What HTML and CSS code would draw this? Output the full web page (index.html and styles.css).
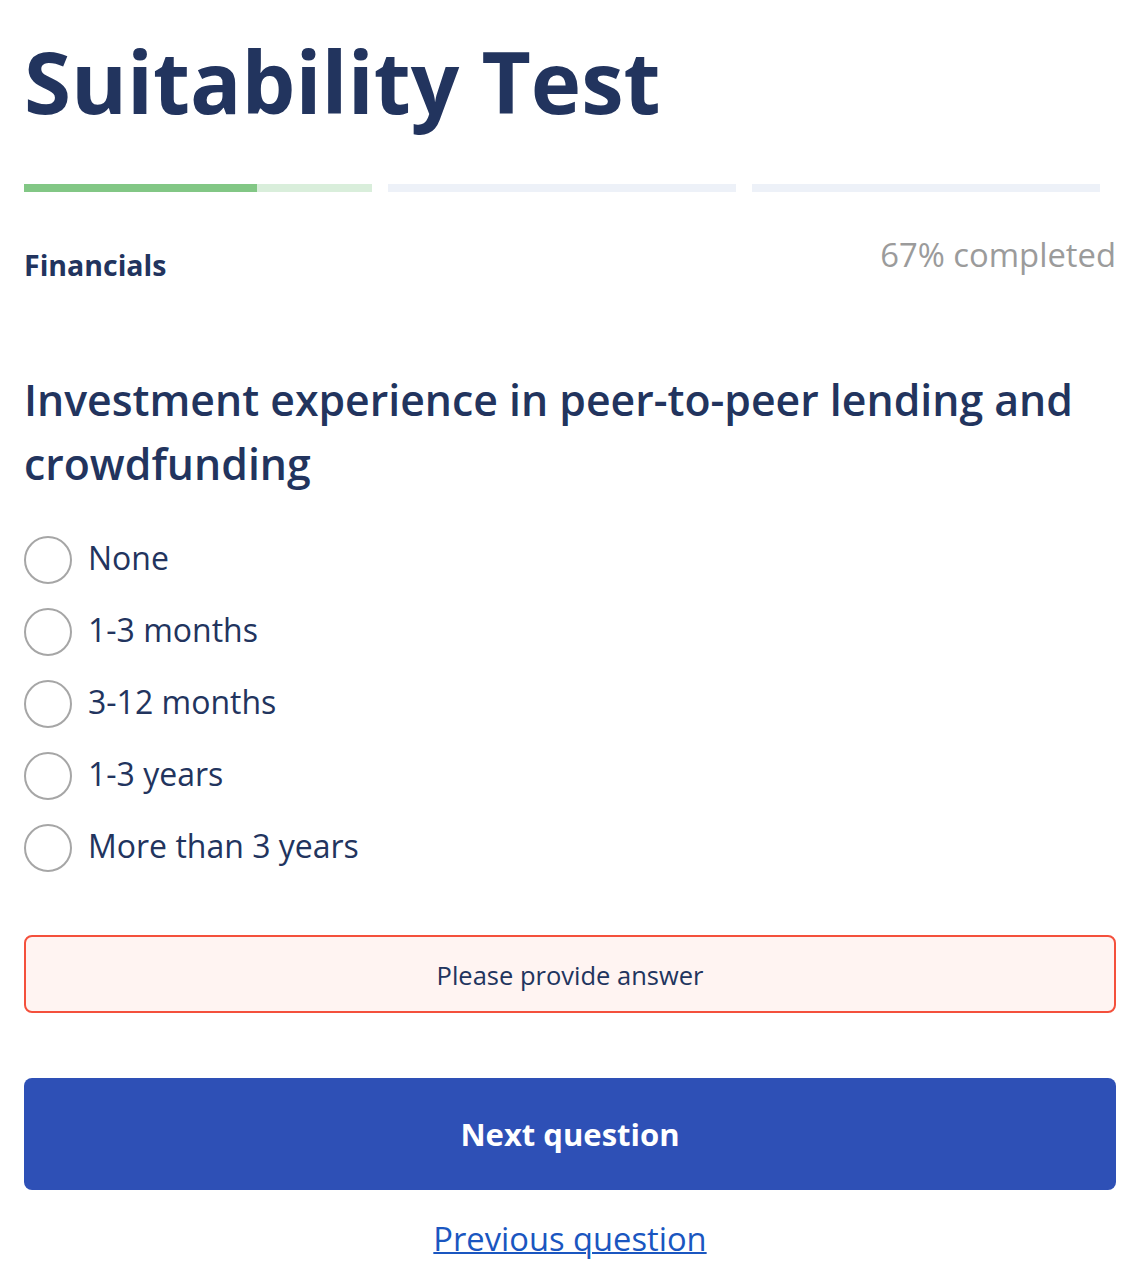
FILE: index.html
```html
<!DOCTYPE html>
<html lang="en">
<head>
<meta charset="utf-8">
<title>Suitability Test</title>
<link rel="stylesheet" href="styles.css">
</head>
<body>
<main class="page">
  <h1 class="title">Suitability Test</h1>

  <div class="steps">
    <div class="step step-active"><div class="step-fill" style="width: 67%"></div></div>
    <div class="step"></div>
    <div class="step"></div>
  </div>

  <div class="status">
    <span class="section">Financials</span>
    <span class="completed">67% completed</span>
  </div>

  <h2 class="question">Investment experience in peer-to-peer lending and crowdfunding</h2>

  <div class="options">
    <label class="option"><input type="radio" name="exp" class="radio"><span class="option-text">None</span></label>
    <label class="option"><input type="radio" name="exp" class="radio"><span class="option-text">1-3 months</span></label>
    <label class="option"><input type="radio" name="exp" class="radio"><span class="option-text">3-12 months</span></label>
    <label class="option"><input type="radio" name="exp" class="radio"><span class="option-text">1-3 years</span></label>
    <label class="option"><input type="radio" name="exp" class="radio"><span class="option-text">More than 3 years</span></label>
  </div>

  <div class="error">Please provide answer</div>

  <button class="next" type="button">Next question</button>

  <div class="prev-wrap"><a class="prev" href="#">Previous question</a></div>
</main>
</body>
</html>
```

FILE: styles.css
```css
* { box-sizing: border-box; }

html, body {
  margin: 0;
  padding: 0;
  background: #ffffff;
}

body {
  font-family: "Open Sans", "Noto Sans", "Liberation Sans", sans-serif;
  color: #22345e;
}

.page {
  padding: 30px 24px 0 24px;
}

.title {
  margin: 0;
  font-size: 85.3px;
  line-height: 103px;
  font-weight: 700;
  color: #22345e;
}

.steps {
  margin-top: 51px;
  display: grid;
  grid-template-columns: repeat(3, 1fr);
  column-gap: 16px;
  padding-right: 16px;
}

.step {
  height: 8px;
  background: #edf1f8;
}

.step-active {
  background: #d9eedb;
}

.step-fill {
  height: 100%;
  background: #82c785;
}

.status {
  margin-top: 43px;
  display: flex;
  justify-content: space-between;
  align-items: flex-start;
}

.section {
  padding-top: 10px;
  font-size: 28.5px;
  line-height: 40px;
  font-weight: 700;
}

.completed {
  font-size: 32.8px;
  line-height: 40px;
  color: #9b9b9b;
}

.question {
  margin: 83px 0 0 0;
  font-size: 42.8px;
  line-height: 64px;
  font-weight: 600;
}

.options {
  margin-top: 40px;
  display: flex;
  flex-direction: column;
  gap: 24px;
}

.option {
  display: flex;
  align-items: center;
  gap: 16px;
  height: 48px;
  cursor: pointer;
}

.radio {
  appearance: none;
  -webkit-appearance: none;
  margin: 0;
  width: 48px;
  height: 48px;
  flex: 0 0 48px;
  border: 2px solid #a6a6a6;
  border-radius: 50%;
  background: #ffffff;
}

.option-text {
  font-size: 32px;
  line-height: 44px;
  margin-bottom: 4px;
}

.error {
  margin-top: 63px;
  border: 2px solid #f4503c;
  border-radius: 8px;
  background: #fff4f2;
  padding: 20px 16px 18px 16px;
  font-size: 25.5px;
  line-height: 36px;
  text-align: center;
}

.next {
  display: block;
  width: 100%;
  margin-top: 65px;
  padding: 36px 16px;
  border: 0;
  border-radius: 8px;
  background: #2e50b6;
  color: #ffffff;
  font-family: inherit;
  font-size: 31px;
  line-height: 40px;
  font-weight: 700;
  cursor: pointer;
}

.prev-wrap {
  margin-top: 29px;
  text-align: center;
  font-size: 32.7px;
  line-height: 40px;
}

.prev {
  color: #1a56c0;
  text-decoration: underline;
  text-decoration-thickness: 2px;
}
```
